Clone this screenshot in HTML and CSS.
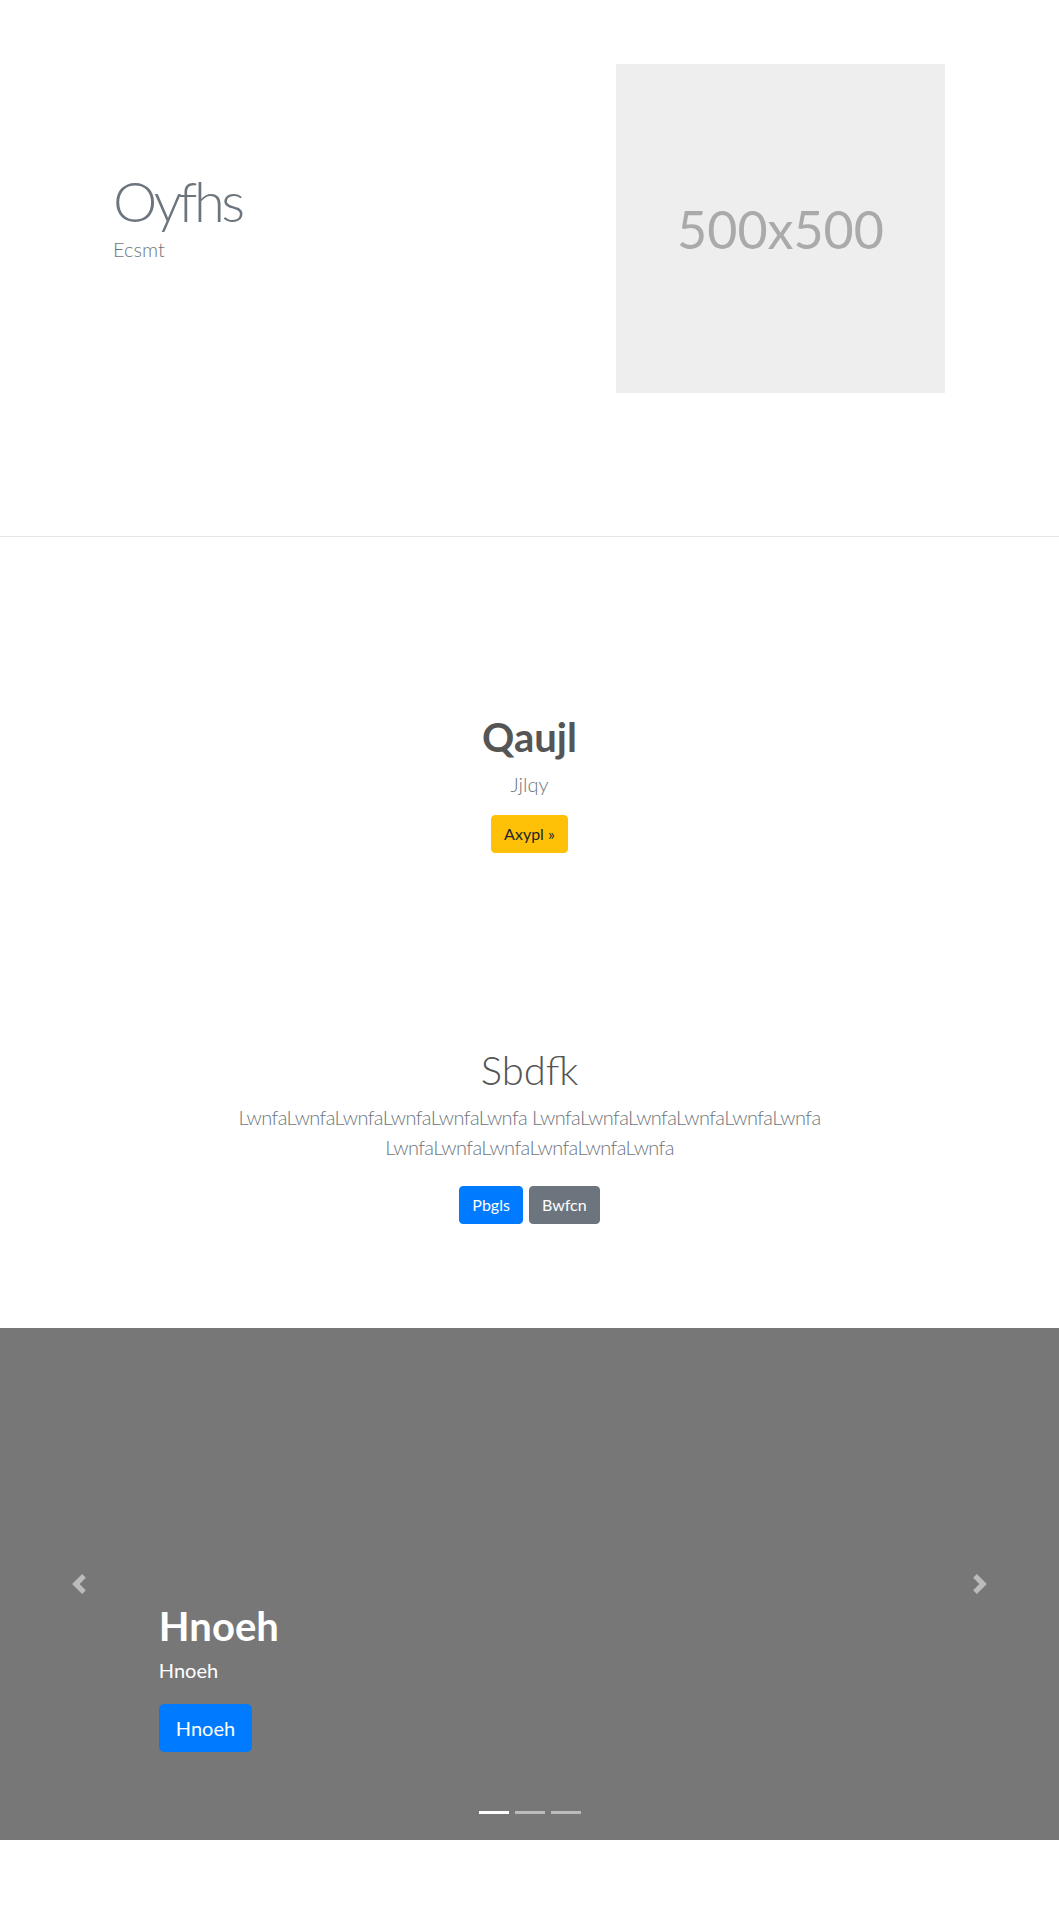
FILE: index.html
```html
<!DOCTYPE html>
<html lang="en">
<head>
<meta charset="utf-8">
<title>Page</title>
<link rel="stylesheet" href="styles.css">
</head>
<body>
<section class="hero">
  <div class="hero-inner">
    <div class="hero-text">
      <h1 class="hero-title">Oyfhs</h1>
      <p class="hero-lead">Ecsmt</p>
    </div>
    <div class="placeholder"><span>500x500</span></div>
  </div>
</section>

<section class="cta">
  <h2 class="cta-title">Qaujl</h2>
  <p class="cta-lead">Jjlqy</p>
  <a class="btn btn-warning" href="#">Axypl »</a>
</section>

<section class="intro">
  <h1 class="intro-title">Sbdfk</h1>
  <p class="intro-lead">LwnfaLwnfaLwnfaLwnfaLwnfaLwnfa LwnfaLwnfaLwnfaLwnfaLwnfaLwnfa LwnfaLwnfaLwnfaLwnfaLwnfaLwnfa</p>
  <div class="btn-row">
    <a class="btn btn-primary" href="#">Pbgls</a>
    <a class="btn btn-secondary" href="#">Bwfcn</a>
  </div>
</section>

<section class="carousel">
  <a class="carousel-control prev" href="#" aria-label="Previous">
    <svg width="20" height="20" viewBox="0 0 8 8"><path fill="#fff" d="M5.25 0l-4 4 4 4 1.5-1.5L4.25 4l2.5-2.5L5.25 0z"/></svg>
  </a>
  <div class="carousel-caption">
    <h1 class="caption-title">Hnoeh</h1>
    <p class="caption-text">Hnoeh</p>
    <a class="btn btn-primary btn-lg" href="#">Hnoeh</a>
  </div>
  <a class="carousel-control next" href="#" aria-label="Next">
    <svg width="20" height="20" viewBox="0 0 8 8"><path fill="#fff" d="M2.75 0l-1.5 1.5L3.75 4l-2.5 2.5L2.75 8l4-4-4-4z"/></svg>
  </a>
  <ol class="carousel-indicators">
    <li class="active"></li>
    <li></li>
    <li></li>
  </ol>
</section>
</body>
</html>
```

FILE: styles.css
```css
* { box-sizing: border-box; }

body {
  margin: 0;
  font-family: "Segoe UI", Lato, "Open Sans", sans-serif;
  font-size: 16px;
  line-height: 1.5;
  color: #212529;
  background: #fff;
}

h1, h2, p { margin: 0; }

/* Hero */
.hero {
  padding: 64px 0 143px;
  border-bottom: 1px solid #e6e6e6;
}
.hero-inner {
  display: flex;
  align-items: flex-start;
  padding-left: 113px;
}
.hero-text {
  flex: 0 0 503px;
  padding-top: 103px;
}
.hero-title {
  font-size: 56px;
  font-weight: 300;
  line-height: 1.2;
  letter-spacing: -3.5px;
  color: #6c757d;
}
.hero-lead {
  font-size: 20px;
  font-weight: 300;
  color: #6c757d;
}
.placeholder {
  width: 329px;
  height: 329px;
  background: #eeeeee;
  display: flex;
  align-items: center;
  justify-content: center;
}
.placeholder span {
  font-size: 52px;
  color: #aaaaaa;
  line-height: 1;
}

/* CTA */
.cta {
  padding-top: 176px;
  text-align: center;
}
.cta-title {
  font-size: 40px;
  font-weight: 700;
  line-height: 1.2;
  color: #555;
  margin-bottom: 8px;
}
.cta-lead {
  font-size: 20px;
  font-weight: 300;
  color: #6c757d;
  margin-bottom: 16px;
}

/* Buttons */
.btn {
  display: inline-block;
  font-size: 16px;
  font-weight: 400;
  line-height: 24px;
  padding: 6px 12px;
  border: 1px solid transparent;
  border-radius: 4px;
  text-decoration: none;
}
.btn-warning { background: #ffc107; border-color: #ffc107; color: #212529; }
.btn-primary { background: #007bff; border-color: #007bff; color: #fff; }
.btn-secondary { background: #6c757d; border-color: #6c757d; color: #fff; }
.btn-lg {
  font-size: 20px;
  line-height: 30px;
  padding: 8px 16px;
  border-radius: 5px;
}

/* Intro */
.intro {
  padding-top: 193px;
  padding-bottom: 104px;
  text-align: center;
}
.intro-title {
  font-size: 40px;
  font-weight: 300;
  line-height: 1.2;
  color: #555;
  margin-bottom: 8px;
}
.intro-lead {
  font-size: 20px;
  font-weight: 300;
  letter-spacing: -0.6px;
  color: #6c757d;
  max-width: 720px;
  margin: 0 auto 24px;
}
.btn-row {
  display: flex;
  justify-content: center;
  gap: 6px;
}

/* Carousel */
.carousel {
  position: relative;
  height: 512px;
  background: #777777;
  margin-bottom: 80px;
}
.carousel-control {
  position: absolute;
  top: 0;
  bottom: 0;
  width: 15%;
  display: flex;
  align-items: center;
  justify-content: center;
  opacity: .5;
}
.carousel-control.prev { left: 0; }
.carousel-control.next { right: 0; }
.carousel-caption {
  position: absolute;
  left: 15%;
  right: 15%;
  top: 274px;
  color: #fff;
}
.caption-title {
  font-size: 40px;
  font-weight: 700;
  line-height: 1.2;
  margin-bottom: 6px;
}
.caption-text {
  font-size: 20px;
  font-weight: 400;
  line-height: 29px;
  margin-bottom: 19px;
}
.carousel-indicators {
  position: absolute;
  left: 0;
  right: 0;
  bottom: 26px;
  margin: 0;
  padding: 0;
  list-style: none;
  display: flex;
  justify-content: center;
  gap: 6px;
}
.carousel-indicators li {
  width: 30px;
  height: 3px;
  background: #fff;
  opacity: .5;
}
.carousel-indicators li.active { opacity: 1; }
```
